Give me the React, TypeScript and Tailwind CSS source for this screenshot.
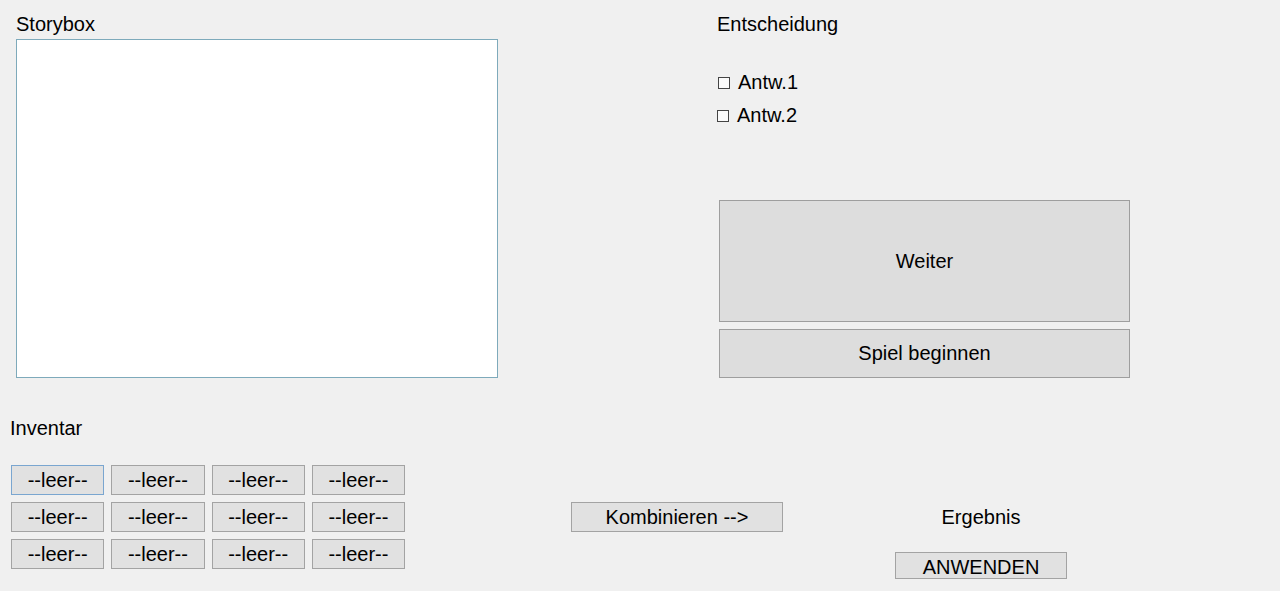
import React from "react";

const btn =
  "flex items-center justify-center border text-black leading-[23px]";

export default function App() {
  const cells = Array.from({ length: 12 }, (_, i) => i);
  return (
    <div
      className="w-[1280px] h-[591px] bg-[#f0f0f0] text-black text-[20px] overflow-hidden flex flex-col"
      style={{ fontFamily: '"Liberation Sans", Arial, sans-serif' }}
    >
      {/* top section */}
      <div className="flex items-start h-[378px]">
        <div className="ml-[16px] pt-[13px] w-[482px] flex flex-col">
          <div className="leading-[23px] h-[23px]">Storybox</div>
          <div className="mt-[3px] h-[339px] w-[482px] bg-white border border-[#7eaabb]" />
        </div>
        <div className="ml-[219px] pt-[13px] flex flex-col">
          <div className="leading-[23px] h-[23px]">Entscheidung</div>
          <label className="mt-[35px] ml-[1px] flex items-center gap-[8px] leading-[23px] h-[23px]">
            <span className="w-[12px] h-[12px] border border-[#444444] bg-[#fafafa]" />
            <span>Antw.1</span>
          </label>
          <label className="mt-[10px] flex items-center gap-[8px] leading-[23px] h-[23px]">
            <span className="w-[12px] h-[12px] border border-[#444444] bg-[#fafafa]" />
            <span>Antw.2</span>
          </label>
          <div className={`${btn} mt-[73px] ml-[2px] w-[411px] h-[122px] bg-[#dddddd] border-[#9e9e9e]`}>
            Weiter
          </div>
          <div className={`${btn} mt-[7px] ml-[2px] w-[411px] h-[49px] bg-[#dddddd] border-[#9e9e9e]`}>
            Spiel beginnen
          </div>
        </div>
      </div>

      {/* inventory label */}
      <div className="ml-[10px] mt-[39px] leading-[23px] h-[23px]">Inventar</div>

      {/* bottom section */}
      <div className="mt-[25px] flex items-start">
        <div className="ml-[11px] w-[394px] grid grid-cols-4 auto-rows-[30px] gap-x-[7px] gap-y-[7px]">
          {cells.map((i) => (
            <div
              key={i}
              className={`${btn} bg-[#e1e1e1] ${i === 0 ? "border-[#7aa6d0]" : "border-[#a3a3a3]"}`}
            >
              --leer--
            </div>
          ))}
        </div>
        <div className={`${btn} bg-[#e1e1e1] border-[#a3a3a3] ml-[166px] mt-[37px] w-[212px] h-[30px]`}>
          Kombinieren --&gt;
        </div>
        <div className="ml-[112px] mt-[41px] w-[172px] flex flex-col items-center">
          <div className="leading-[23px] h-[23px]">Ergebnis</div>
          <div className={`${btn} bg-[#e1e1e1] border-[#a3a3a3] mt-[23px] w-[172px] h-[27px] pt-[3px]`}>
            ANWENDEN
          </div>
        </div>
      </div>
    </div>
  );
}
